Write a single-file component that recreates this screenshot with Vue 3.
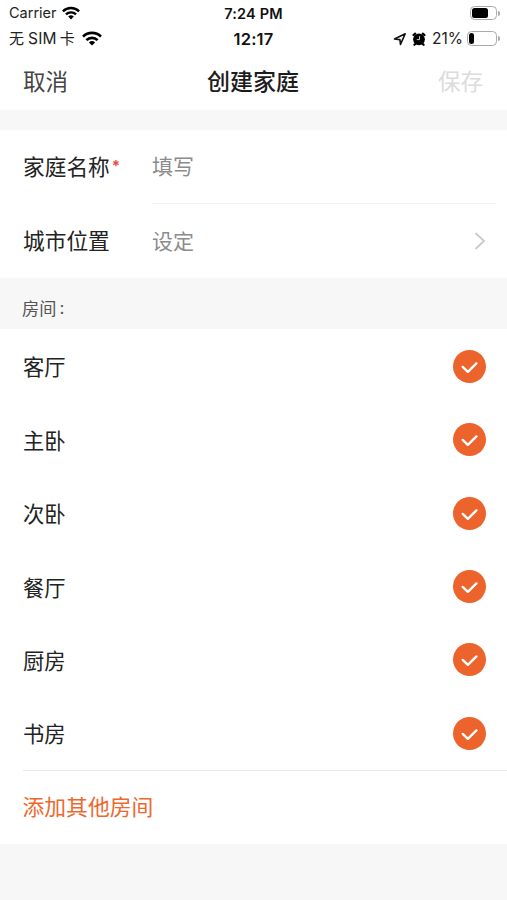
<script setup>
import { ref } from 'vue'

const familyName = ref('')

const rooms = ref([
  { name: '客厅', checked: true },
  { name: '主卧', checked: true },
  { name: '次卧', checked: true },
  { name: '餐厅', checked: true },
  { name: '厨房', checked: true },
  { name: '书房', checked: true },
])

const statusBars = [
  { carrier: 'Carrier', time: '7:24 PM', level: 16, percent: '' },
  { carrier: '无SIM卡', time: '12:17', level: 5, percent: '21%' },
]

const toggleRoom = (room) => {
  room.checked = !room.checked
}
</script>

<template>
  <div class="page">
    <div v-for="(bar, i) in statusBars" :key="bar.time" class="status" :class="'status-' + i">
      <div class="status-left">
        <span v-if="i === 0" class="carrier">{{ bar.carrier }}</span>
        <span v-else class="carrier"><span class="han">无</span><span class="sim">SIM</span><span class="han">卡</span></span>
        <svg class="wifi" viewBox="0 0 20 15">
          <g fill="none" stroke="#000" stroke-width="2.7">
            <path d="M1 5.6a12.8 12.8 0 0 1 18 0" />
            <path d="M4.4 9.1a8 8 0 0 1 11.2 0" />
          </g>
          <path d="M6.9 11.5a4.5 4.5 0 0 1 6.2 0L10 14.6z" />
        </svg>
      </div>
      <div class="time">{{ bar.time }}</div>
      <div class="status-right">
        <template v-if="bar.percent">
          <svg class="arrow" viewBox="0 0 14 14">
            <path d="M1.5 7 12.2 1.8 7.5 12.4 6.9 7.6z" fill="none" stroke="#111" stroke-width="1.6" stroke-linejoin="round" />
          </svg>
          <svg class="alarm" viewBox="0 0 14 14">
            <path d="M1.5 3 3.2 1.6M12.5 3 10.8 1.6M2.4 12.8l1.8-1.6M11.6 12.8l-1.8-1.6" stroke="#000" stroke-width="2.2" stroke-linecap="round" />
            <circle cx="7" cy="7.3" r="5.9" />
            <path d="M7.5 4.2v3.4H4.8" fill="none" stroke="#ddd" stroke-width=".9" />
          </svg>
          <span class="percent">{{ bar.percent }}</span>
        </template>
        <span class="battery"><span class="level" :style="{ width: bar.level + 'px' }"></span></span>
        <span class="tip"></span>
      </div>
    </div>

    <header class="navbar">
      <span class="nav-btn">取消</span>
      <h1>创建家庭</h1>
      <span class="nav-btn disabled">保存</span>
    </header>

    <section class="form">
      <div class="field">
        <label class="label" for="family-name">家庭名称<span class="required">*</span></label>
        <div class="value line">
          <input id="family-name" v-model="familyName" placeholder="填写" />
        </div>
      </div>
      <div class="field">
        <span class="label">城市位置</span>
        <div class="value">
          <span>设定</span>
          <svg class="chevron" viewBox="0 0 12 20">
            <path d="M1.5 2 10 10l-8.5 8" fill="none" stroke="#cacaca" stroke-width="1.8" />
          </svg>
        </div>
      </div>
    </section>

    <div class="section-title">房间<span class="colon">:</span></div>

    <section class="rooms">
      <div v-for="room in rooms" :key="room.name" class="room" @click="toggleRoom(room)">
        <span>{{ room.name }}</span>
        <svg v-if="room.checked" class="check" viewBox="0 0 32 32">
          <circle cx="16" cy="16" r="16" fill="#ec632b" />
          <path d="m9.4 16.4 5 4.8 8.3-8.2" fill="none" stroke="#fff" stroke-width="2.3" stroke-linecap="round" stroke-linejoin="round" />
        </svg>
      </div>
      <div class="add">添加其他房间</div>
    </section>
  </div>
</template>

<style>
body {
  background: #f7f7f7;
}
</style>

<style scoped>
.page {
  height: 900px;
  overflow: hidden;
  background: #f7f7f7;
  color: #222;
  font-family: Inter, 'Noto Sans CJK SC', sans-serif;
  font-size: 21.3px;
}

/* Статус-бари */
.status {
  display: grid;
  grid-template-columns: 1fr auto 1fr;
  align-items: center;
  height: 26px;
  padding: 0 7px 0 9px;
  background: #fff;
  font-size: 14.5px;
}
.status-1 {
  height: 25px;
  font-size: 15.5px;
}
.status-left,
.status-right {
  display: flex;
  align-items: center;
}
.status-right { justify-content: flex-end; }
.carrier {
  display: flex;
  align-items: center;
  line-height: 20px;
}
.han { font-size: 15px; }
.sim {
  margin: 0 3px 0 4px;
  letter-spacing: 0.2px;
}
.wifi {
  width: 18px;
  height: 14px;
  margin-left: 5px;
}
.status-1 .wifi {
  width: 20px;
  height: 15px;
  margin-left: 7px;
}
.time {
  margin-right: 2px;
  color: #111;
  font-weight: 600;
  letter-spacing: 0.2px;
}
.status-1 .time {
  font-size: 16.5px;
}
.arrow { width: 14px; height: 14px; margin-right: 5px; }
.alarm { width: 14px; height: 14px; margin-right: 6px; }
.percent { margin-right: 4px; }
.battery {
  box-sizing: border-box;
  width: 27px;
  height: 14px;
  padding: 1px;
  border: 1.4px solid #aaa;
  border-radius: 4.5px;
}
.status-1 .battery {
  width: 30px;
  height: 15px;
}
.level {
  display: block;
  height: 100%;
  border-radius: 2.5px;
  background: #000;
}
.tip {
  width: 2px;
  height: 5px;
  margin-left: 1px;
  border-radius: 0 2px 2px 0;
  background: #aaa;
}

/* Шапка */
.navbar {
  box-sizing: border-box;
  display: flex;
  align-items: center;
  justify-content: space-between;
  height: 59px;
  padding: 0 24px 2px 23px;
  background: #fff;
}
.navbar h1 {
  margin: 0;
  color: #1c1c1c;
  font-size: 23px;
  font-weight: 500;
}
.nav-btn {
  color: #444;
  font-size: 22.5px;
}
.nav-btn.disabled { color: #dcdcdc; }

/* Форма */
.form {
  margin-top: 20px;
  background: #fff;
}
.field {
  display: flex;
  height: 74px;
  padding: 0 11px 0 23px;
}
.label {
  box-sizing: border-box;
  display: flex;
  align-items: center;
  width: 129px;
  padding-bottom: 3px;
  font-size: 21.7px;
}
.required {
  margin-left: 2px;
  color: #f04a3e;
  font-size: 15px;
  font-weight: 700;
}
.value {
  display: flex;
  flex: 1;
  align-items: center;
  justify-content: space-between;
  color: #8b8b8b;
  font-size: 21px;
}
.value > span { padding-bottom: 3px; }
.value.line { border-bottom: 1px solid #f3f3f3; }
.value input {
  width: 100%;
  padding: 0;
  border: 0;
  outline: none;
  background: none;
  color: #222;
  font: inherit;
}
.value input::placeholder { color: #8b8b8b; opacity: 1; }
.chevron {
  width: 12px;
  height: 20px;
  margin-right: 10px;
}

/* Кімнати */
.section-title {
  display: flex;
  align-items: center;
  height: 43px;
  padding: 8px 22px 0;
  color: #555;
  font-size: 17.2px;
}
.colon { margin-left: 3px; }
.rooms { background: #fff; }
.room {
  display: flex;
  align-items: center;
  justify-content: space-between;
  height: 73.45px;
  padding: 0 21.5px 0 23px;
}
.check {
  width: 33px;
  height: 33px;
  margin-top: 1px;
}
.add {
  box-sizing: border-box;
  height: 74px;
  margin-left: 22.5px;
  border-top: 1.4px solid #e9e9e9;
  color: #ed682f;
  font-size: 21.8px;
  line-height: 73px;
}
</style>
